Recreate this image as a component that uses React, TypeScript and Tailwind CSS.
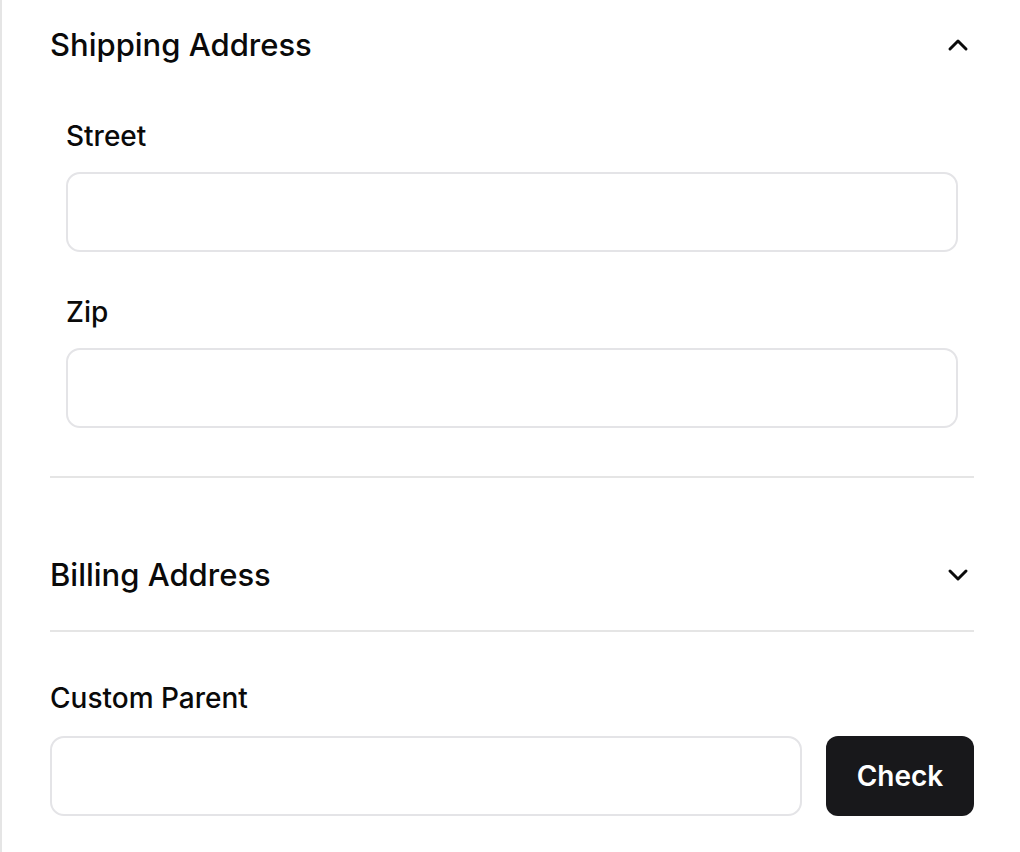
import React, { useState } from 'react';
import { ChevronUp, ChevronDown } from 'lucide-react';

const Field: React.FC<{ label: string }> = ({ label }) => (
  <div className="flex flex-col">
    <label className="text-[28px] leading-[40px] font-medium text-[#0a0a0a]">{label}</label>
    <input
      type="text"
      className="mt-4 h-20 w-full rounded-[14px] border-2 border-[#e4e4e7] bg-white px-5 text-[28px] outline-none"
    />
  </div>
);

export default function App() {
  const [shippingOpen, setShippingOpen] = useState(true);
  const [billingOpen, setBillingOpen] = useState(false);

  return (
    <div
      className="min-h-screen bg-white border-l-2 border-[#e5e5e5] pl-[48px] pr-[46px] text-[#0a0a0a]"
      style={{ fontFamily: 'Inter, "Noto Sans", sans-serif' }}
    >
      {/* Shipping */}
      <div className="border-b-2 border-[#e5e5e5] pb-12">
        <button
          type="button"
          onClick={() => setShippingOpen((p) => !p)}
          className="flex h-[90px] w-full items-center justify-between"
        >
          <span className="text-[31px] font-medium">Shipping Address</span>
          <ChevronUp className="h-8 w-8" strokeWidth={2.25} />
        </button>
        {shippingOpen && (
          <div className="flex flex-col gap-10 px-4 pt-[26px]">
            <Field label="Street" />
            <Field label="Zip" />
          </div>
        )}
      </div>

      {/* Billing */}
      <div className="border-b-2 border-[#e5e5e5] pt-[52px] pb-[10px]">
        <button
          type="button"
          onClick={() => setBillingOpen((p) => !p)}
          className="flex h-[90px] w-full items-center justify-between"
        >
          <span className="text-[31px] font-medium">Billing Address</span>
          <ChevronDown className="h-8 w-8" strokeWidth={2.25} />
        </button>
      </div>

      {/* Custom parent */}
      <div className="pt-[46px]">
        <label className="block text-[28px] leading-[40px] font-medium">Custom Parent</label>
        <div className="mt-[18px] flex gap-6">
          <input
            type="text"
            className="h-20 flex-1 rounded-[14px] border-2 border-[#e4e4e7] bg-white px-5 text-[28px] outline-none"
          />
          <button
            type="button"
            className="h-20 w-[148px] rounded-[12px] bg-[#18181b] text-[28px] font-semibold text-white"
          >
            Check
          </button>
        </div>
      </div>
    </div>
  );
}
